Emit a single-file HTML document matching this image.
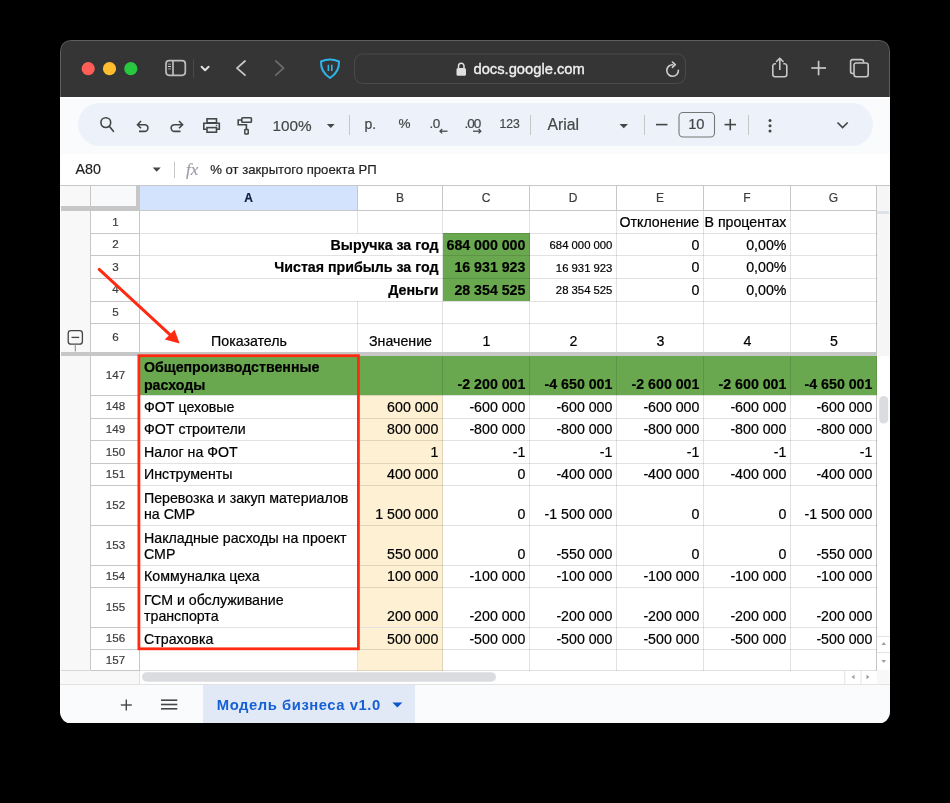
<!DOCTYPE html>
<html><head><meta charset="utf-8"><style>
html,body{margin:0;padding:0;}
body{width:950px;height:803px;background:#000;position:relative;overflow:hidden;font-family:'Liberation Sans', sans-serif;}
#win{will-change:transform;position:absolute;left:0;top:0;width:950px;height:803px;clip-path:inset(40px 60px 79.5px 60px round 10.5px 10.5px 11.5px 11.5px);}
#win div{position:absolute;}
#ov{position:absolute;left:0;top:0;}
</style></head><body><div id="win">
<div style="left:60px;top:40px;width:830px;height:683px;background:#f9fbfd;"></div>
<div style="left:60px;top:40px;width:830px;height:57px;background:#353535;"></div>
<div style="left:60px;top:97px;width:830px;height:1.5px;background:#ffffff;"></div>
<div style="left:78px;top:103.4px;width:795px;height:42.6px;background:#edf2fa;border-radius:21.3px;"></div>
<div style="left:61px;top:154px;width:828px;height:31px;background:#ffffff;"></div>
<div style="left:60px;top:185px;width:830px;height:1px;background:#c7c7c7;"></div>
<div style="left:61px;top:186px;width:828px;height:498px;background:#ffffff;"></div>
<div style="left:61px;top:186px;width:29px;height:484px;background:#f8f8f8;"></div>
<div style="left:91px;top:186px;width:46px;height:20px;background:#f8f9fa;"></div>
<div style="left:61px;top:670px;width:79px;height:14px;background:#f8f8f8;"></div>
<div style="left:90px;top:186px;width:1px;height:484px;background:#c7c7c7;"></div>
<div style="left:140px;top:186px;width:218px;height:25px;background:#d3e3fd;"></div>
<div style="left:877px;top:186px;width:12px;height:169.5px;background:#f6f6f6;"></div>
<div style="left:877px;top:211px;width:12px;height:3px;background:#dde1e8;"></div>
<div style="left:877px;top:670px;width:12px;height:14px;background:#f8f8f8;"></div>
<div style="left:876px;top:186px;width:1px;height:484px;background:rgba(0,0,0,0.12);"></div>
<div style="left:139px;top:670px;width:1px;height:14px;background:#e0e0e0;"></div>
<div style="left:61px;top:670px;width:30px;height:1px;background:#d8d8d8;"></div>
<div style="left:443px;top:233.1px;width:87px;height:22.700000000000017px;background:#6aa84f;"></div>
<div style="left:443px;top:255.8px;width:87px;height:22.599999999999966px;background:#6aa84f;"></div>
<div style="left:443px;top:278.4px;width:87px;height:22.600000000000023px;background:#6aa84f;"></div>
<div style="left:140px;top:355.5px;width:737px;height:39.8px;background:#6aa84f;"></div>
<div style="left:358px;top:395.3px;width:85px;height:22.80000000000001px;background:#fdf0d3;"></div>
<div style="left:358px;top:418.1px;width:85px;height:22.5px;background:#fdf0d3;"></div>
<div style="left:358px;top:440.6px;width:85px;height:22.599999999999966px;background:#fdf0d3;"></div>
<div style="left:358px;top:463.2px;width:85px;height:22.5px;background:#fdf0d3;"></div>
<div style="left:358px;top:485.7px;width:85px;height:39.69999999999999px;background:#fdf0d3;"></div>
<div style="left:358px;top:525.4px;width:85px;height:40.30000000000007px;background:#fdf0d3;"></div>
<div style="left:358px;top:565.7px;width:85px;height:21.699999999999932px;background:#fdf0d3;"></div>
<div style="left:358px;top:587.4px;width:85px;height:40.10000000000002px;background:#fdf0d3;"></div>
<div style="left:358px;top:627.5px;width:85px;height:22.25px;background:#fdf0d3;"></div>
<div style="left:358px;top:649.75px;width:85px;height:20.75px;background:#fdf0d3;"></div>
<div style="left:140px;top:232.6px;width:737px;height:1px;background:rgba(0,0,0,0.115);"></div>
<div style="left:91px;top:232.6px;width:49px;height:1px;background:#c7c7c7;"></div>
<div style="left:140px;top:255.3px;width:737px;height:1px;background:rgba(0,0,0,0.115);"></div>
<div style="left:91px;top:255.3px;width:49px;height:1px;background:#c7c7c7;"></div>
<div style="left:140px;top:277.9px;width:737px;height:1px;background:rgba(0,0,0,0.115);"></div>
<div style="left:91px;top:277.9px;width:49px;height:1px;background:#c7c7c7;"></div>
<div style="left:140px;top:300.5px;width:737px;height:1px;background:rgba(0,0,0,0.115);"></div>
<div style="left:91px;top:300.5px;width:49px;height:1px;background:#c7c7c7;"></div>
<div style="left:140px;top:323.0px;width:737px;height:1px;background:rgba(0,0,0,0.115);"></div>
<div style="left:91px;top:323.0px;width:49px;height:1px;background:#c7c7c7;"></div>
<div style="left:140px;top:394.8px;width:737px;height:1px;background:rgba(0,0,0,0.115);"></div>
<div style="left:91px;top:394.8px;width:49px;height:1px;background:#c7c7c7;"></div>
<div style="left:140px;top:417.6px;width:737px;height:1px;background:rgba(0,0,0,0.115);"></div>
<div style="left:91px;top:417.6px;width:49px;height:1px;background:#c7c7c7;"></div>
<div style="left:140px;top:440.1px;width:737px;height:1px;background:rgba(0,0,0,0.115);"></div>
<div style="left:91px;top:440.1px;width:49px;height:1px;background:#c7c7c7;"></div>
<div style="left:140px;top:462.7px;width:737px;height:1px;background:rgba(0,0,0,0.115);"></div>
<div style="left:91px;top:462.7px;width:49px;height:1px;background:#c7c7c7;"></div>
<div style="left:140px;top:485.2px;width:737px;height:1px;background:rgba(0,0,0,0.115);"></div>
<div style="left:91px;top:485.2px;width:49px;height:1px;background:#c7c7c7;"></div>
<div style="left:140px;top:524.9px;width:737px;height:1px;background:rgba(0,0,0,0.115);"></div>
<div style="left:91px;top:524.9px;width:49px;height:1px;background:#c7c7c7;"></div>
<div style="left:140px;top:565.2px;width:737px;height:1px;background:rgba(0,0,0,0.115);"></div>
<div style="left:91px;top:565.2px;width:49px;height:1px;background:#c7c7c7;"></div>
<div style="left:140px;top:586.9px;width:737px;height:1px;background:rgba(0,0,0,0.115);"></div>
<div style="left:91px;top:586.9px;width:49px;height:1px;background:#c7c7c7;"></div>
<div style="left:140px;top:627.0px;width:737px;height:1px;background:rgba(0,0,0,0.115);"></div>
<div style="left:91px;top:627.0px;width:49px;height:1px;background:#c7c7c7;"></div>
<div style="left:140px;top:649.25px;width:737px;height:1px;background:rgba(0,0,0,0.115);"></div>
<div style="left:91px;top:649.25px;width:49px;height:1px;background:#c7c7c7;"></div>
<div style="left:140px;top:670.0px;width:737px;height:1px;background:rgba(0,0,0,0.115);"></div>
<div style="left:91px;top:670.0px;width:49px;height:1px;background:#c7c7c7;"></div>
<div style="left:139px;top:186px;width:1px;height:484px;background:#c7c7c7;"></div>
<div style="left:357px;top:186px;width:1px;height:25px;background:#c7c7c7;"></div>
<div style="left:357px;top:211px;width:1px;height:22px;background:rgba(0,0,0,0.115);"></div>
<div style="left:357px;top:301px;width:1px;height:50.5px;background:rgba(0,0,0,0.115);"></div>
<div style="left:357px;top:355.5px;width:1px;height:315px;background:rgba(0,0,0,0.115);"></div>
<div style="left:442px;top:186px;width:1px;height:25px;background:#c7c7c7;"></div>
<div style="left:442px;top:211px;width:1px;height:140.5px;background:rgba(0,0,0,0.115);"></div>
<div style="left:442px;top:355.5px;width:1px;height:315px;background:rgba(0,0,0,0.115);"></div>
<div style="left:529px;top:186px;width:1px;height:25px;background:#c7c7c7;"></div>
<div style="left:529px;top:211px;width:1px;height:140.5px;background:rgba(0,0,0,0.115);"></div>
<div style="left:529px;top:355.5px;width:1px;height:315px;background:rgba(0,0,0,0.115);"></div>
<div style="left:616px;top:186px;width:1px;height:25px;background:#c7c7c7;"></div>
<div style="left:616px;top:211px;width:1px;height:140.5px;background:rgba(0,0,0,0.115);"></div>
<div style="left:616px;top:355.5px;width:1px;height:315px;background:rgba(0,0,0,0.115);"></div>
<div style="left:703px;top:186px;width:1px;height:25px;background:#c7c7c7;"></div>
<div style="left:703px;top:211px;width:1px;height:140.5px;background:rgba(0,0,0,0.115);"></div>
<div style="left:703px;top:355.5px;width:1px;height:315px;background:rgba(0,0,0,0.115);"></div>
<div style="left:790px;top:186px;width:1px;height:25px;background:#c7c7c7;"></div>
<div style="left:790px;top:211px;width:1px;height:140.5px;background:rgba(0,0,0,0.115);"></div>
<div style="left:790px;top:355.5px;width:1px;height:315px;background:rgba(0,0,0,0.115);"></div>
<div style="left:876px;top:186px;width:1px;height:25px;background:#c7c7c7;"></div>
<div style="left:876px;top:211px;width:1px;height:140.5px;background:rgba(0,0,0,0.115);"></div>
<div style="left:876px;top:355.5px;width:1px;height:315px;background:rgba(0,0,0,0.115);"></div>
<div style="left:140px;top:210px;width:737px;height:1px;background:#c7c7c7;"></div>
<div style="left:61px;top:206px;width:79px;height:4.5px;background:#c7c7c7;"></div>
<div style="left:136px;top:186px;width:4px;height:24.5px;background:#c7c7c7;"></div>
<div style="left:61px;top:351.5px;width:816px;height:4px;background:#c7c7c7;"></div>
<div style="top:192.04px;font-size:12px;line-height:12px;font-weight:700;color:#0b1f3f;font-family:'Liberation Sans', sans-serif;white-space:pre;-webkit-text-stroke:0.2px #0b1f3f;left:-51.5px;width:600px;text-align:center;">A</div>
<div style="top:192.04px;font-size:12px;line-height:12px;font-weight:400;color:#3c3c3c;font-family:'Liberation Sans', sans-serif;white-space:pre;-webkit-text-stroke:0.2px #3c3c3c;left:100.0px;width:600px;text-align:center;">B</div>
<div style="top:192.04px;font-size:12px;line-height:12px;font-weight:400;color:#3c3c3c;font-family:'Liberation Sans', sans-serif;white-space:pre;-webkit-text-stroke:0.2px #3c3c3c;left:186.0px;width:600px;text-align:center;">C</div>
<div style="top:192.04px;font-size:12px;line-height:12px;font-weight:400;color:#3c3c3c;font-family:'Liberation Sans', sans-serif;white-space:pre;-webkit-text-stroke:0.2px #3c3c3c;left:273.0px;width:600px;text-align:center;">D</div>
<div style="top:192.04px;font-size:12px;line-height:12px;font-weight:400;color:#3c3c3c;font-family:'Liberation Sans', sans-serif;white-space:pre;-webkit-text-stroke:0.2px #3c3c3c;left:360.0px;width:600px;text-align:center;">E</div>
<div style="top:192.04px;font-size:12px;line-height:12px;font-weight:400;color:#3c3c3c;font-family:'Liberation Sans', sans-serif;white-space:pre;-webkit-text-stroke:0.2px #3c3c3c;left:447.0px;width:600px;text-align:center;">F</div>
<div style="top:192.04px;font-size:12px;line-height:12px;font-weight:400;color:#3c3c3c;font-family:'Liberation Sans', sans-serif;white-space:pre;-webkit-text-stroke:0.2px #3c3c3c;left:533.5px;width:600px;text-align:center;">G</div>
<div style="top:215.83px;font-size:11.6px;line-height:11.6px;font-weight:400;color:#3c3c3c;font-family:'Liberation Sans', sans-serif;white-space:pre;-webkit-text-stroke:0.2px #3c3c3c;left:-184.5px;width:600px;text-align:center;">1</div>
<div style="top:238.23px;font-size:11.6px;line-height:11.6px;font-weight:400;color:#3c3c3c;font-family:'Liberation Sans', sans-serif;white-space:pre;-webkit-text-stroke:0.2px #3c3c3c;left:-184.5px;width:600px;text-align:center;">2</div>
<div style="top:260.88px;font-size:11.6px;line-height:11.6px;font-weight:400;color:#3c3c3c;font-family:'Liberation Sans', sans-serif;white-space:pre;-webkit-text-stroke:0.2px #3c3c3c;left:-184.5px;width:600px;text-align:center;">3</div>
<div style="top:283.48px;font-size:11.6px;line-height:11.6px;font-weight:400;color:#3c3c3c;font-family:'Liberation Sans', sans-serif;white-space:pre;-webkit-text-stroke:0.2px #3c3c3c;left:-184.5px;width:600px;text-align:center;">4</div>
<div style="top:306.03px;font-size:11.6px;line-height:11.6px;font-weight:400;color:#3c3c3c;font-family:'Liberation Sans', sans-serif;white-space:pre;-webkit-text-stroke:0.2px #3c3c3c;left:-184.5px;width:600px;text-align:center;">5</div>
<div style="top:331.28px;font-size:11.6px;line-height:11.6px;font-weight:400;color:#3c3c3c;font-family:'Liberation Sans', sans-serif;white-space:pre;-webkit-text-stroke:0.2px #3c3c3c;left:-184.5px;width:600px;text-align:center;">6</div>
<div style="top:369.18px;font-size:11.6px;line-height:11.6px;font-weight:400;color:#3c3c3c;font-family:'Liberation Sans', sans-serif;white-space:pre;-webkit-text-stroke:0.2px #3c3c3c;left:-184.5px;width:600px;text-align:center;">147</div>
<div style="top:400.48px;font-size:11.6px;line-height:11.6px;font-weight:400;color:#3c3c3c;font-family:'Liberation Sans', sans-serif;white-space:pre;-webkit-text-stroke:0.2px #3c3c3c;left:-184.5px;width:600px;text-align:center;">148</div>
<div style="top:423.13px;font-size:11.6px;line-height:11.6px;font-weight:400;color:#3c3c3c;font-family:'Liberation Sans', sans-serif;white-space:pre;-webkit-text-stroke:0.2px #3c3c3c;left:-184.5px;width:600px;text-align:center;">149</div>
<div style="top:445.68px;font-size:11.6px;line-height:11.6px;font-weight:400;color:#3c3c3c;font-family:'Liberation Sans', sans-serif;white-space:pre;-webkit-text-stroke:0.2px #3c3c3c;left:-184.5px;width:600px;text-align:center;">150</div>
<div style="top:468.23px;font-size:11.6px;line-height:11.6px;font-weight:400;color:#3c3c3c;font-family:'Liberation Sans', sans-serif;white-space:pre;-webkit-text-stroke:0.2px #3c3c3c;left:-184.5px;width:600px;text-align:center;">151</div>
<div style="top:499.33px;font-size:11.6px;line-height:11.6px;font-weight:400;color:#3c3c3c;font-family:'Liberation Sans', sans-serif;white-space:pre;-webkit-text-stroke:0.2px #3c3c3c;left:-184.5px;width:600px;text-align:center;">152</div>
<div style="top:539.33px;font-size:11.6px;line-height:11.6px;font-weight:400;color:#3c3c3c;font-family:'Liberation Sans', sans-serif;white-space:pre;-webkit-text-stroke:0.2px #3c3c3c;left:-184.5px;width:600px;text-align:center;">153</div>
<div style="top:570.33px;font-size:11.6px;line-height:11.6px;font-weight:400;color:#3c3c3c;font-family:'Liberation Sans', sans-serif;white-space:pre;-webkit-text-stroke:0.2px #3c3c3c;left:-184.5px;width:600px;text-align:center;">154</div>
<div style="top:601.23px;font-size:11.6px;line-height:11.6px;font-weight:400;color:#3c3c3c;font-family:'Liberation Sans', sans-serif;white-space:pre;-webkit-text-stroke:0.2px #3c3c3c;left:-184.5px;width:600px;text-align:center;">155</div>
<div style="top:632.41px;font-size:11.6px;line-height:11.6px;font-weight:400;color:#3c3c3c;font-family:'Liberation Sans', sans-serif;white-space:pre;-webkit-text-stroke:0.2px #3c3c3c;left:-184.5px;width:600px;text-align:center;">156</div>
<div style="top:653.91px;font-size:11.6px;line-height:11.6px;font-weight:400;color:#3c3c3c;font-family:'Liberation Sans', sans-serif;white-space:pre;-webkit-text-stroke:0.2px #3c3c3c;left:-184.5px;width:600px;text-align:center;">157</div>
<div style="top:215.38px;font-size:14.2px;line-height:14.2px;font-weight:400;color:#000;font-family:'Liberation Sans', sans-serif;white-space:pre;-webkit-text-stroke:0.2px #000;left:619.5px;">Отклонение</div>
<div style="top:215.38px;font-size:14.2px;line-height:14.2px;font-weight:400;color:#000;font-family:'Liberation Sans', sans-serif;white-space:pre;-webkit-text-stroke:0.2px #000;left:704.5px;">В процентах</div>
<div style="top:237.58px;font-size:14.2px;line-height:14.2px;font-weight:700;color:#000;font-family:'Liberation Sans', sans-serif;white-space:pre;-webkit-text-stroke:0.2px #000;right:511.6px;text-align:right;">Выручка за год</div>
<div style="top:237.58px;font-size:14.2px;line-height:14.2px;font-weight:700;color:#000;font-family:'Liberation Sans', sans-serif;white-space:pre;-webkit-text-stroke:0.2px #000;right:424.6px;text-align:right;">684 000 000</div>
<div style="top:240.03px;font-size:11.3px;line-height:11.3px;font-weight:400;color:#000;font-family:'Liberation Sans', sans-serif;white-space:pre;-webkit-text-stroke:0.2px #000;right:337.6px;text-align:right;">684 000 000</div>
<div style="top:237.58px;font-size:14.2px;line-height:14.2px;font-weight:400;color:#000;font-family:'Liberation Sans', sans-serif;white-space:pre;-webkit-text-stroke:0.2px #000;right:250.60000000000002px;text-align:right;">0</div>
<div style="top:237.58px;font-size:14.2px;line-height:14.2px;font-weight:400;color:#000;font-family:'Liberation Sans', sans-serif;white-space:pre;-webkit-text-stroke:0.2px #000;right:163.60000000000002px;text-align:right;">0,00%</div>
<div style="top:260.18px;font-size:14.2px;line-height:14.2px;font-weight:700;color:#000;font-family:'Liberation Sans', sans-serif;white-space:pre;-webkit-text-stroke:0.2px #000;right:511.6px;text-align:right;">Чистая прибыль за год</div>
<div style="top:260.18px;font-size:14.2px;line-height:14.2px;font-weight:700;color:#000;font-family:'Liberation Sans', sans-serif;white-space:pre;-webkit-text-stroke:0.2px #000;right:424.6px;text-align:right;">16 931 923</div>
<div style="top:262.63px;font-size:11.3px;line-height:11.3px;font-weight:400;color:#000;font-family:'Liberation Sans', sans-serif;white-space:pre;-webkit-text-stroke:0.2px #000;right:337.6px;text-align:right;">16 931 923</div>
<div style="top:260.18px;font-size:14.2px;line-height:14.2px;font-weight:400;color:#000;font-family:'Liberation Sans', sans-serif;white-space:pre;-webkit-text-stroke:0.2px #000;right:250.60000000000002px;text-align:right;">0</div>
<div style="top:260.18px;font-size:14.2px;line-height:14.2px;font-weight:400;color:#000;font-family:'Liberation Sans', sans-serif;white-space:pre;-webkit-text-stroke:0.2px #000;right:163.60000000000002px;text-align:right;">0,00%</div>
<div style="top:282.78px;font-size:14.2px;line-height:14.2px;font-weight:700;color:#000;font-family:'Liberation Sans', sans-serif;white-space:pre;-webkit-text-stroke:0.2px #000;right:511.6px;text-align:right;">Деньги</div>
<div style="top:282.78px;font-size:14.2px;line-height:14.2px;font-weight:700;color:#000;font-family:'Liberation Sans', sans-serif;white-space:pre;-webkit-text-stroke:0.2px #000;right:424.6px;text-align:right;">28 354 525</div>
<div style="top:285.23px;font-size:11.3px;line-height:11.3px;font-weight:400;color:#000;font-family:'Liberation Sans', sans-serif;white-space:pre;-webkit-text-stroke:0.2px #000;right:337.6px;text-align:right;">28 354 525</div>
<div style="top:282.78px;font-size:14.2px;line-height:14.2px;font-weight:400;color:#000;font-family:'Liberation Sans', sans-serif;white-space:pre;-webkit-text-stroke:0.2px #000;right:250.60000000000002px;text-align:right;">0</div>
<div style="top:282.78px;font-size:14.2px;line-height:14.2px;font-weight:400;color:#000;font-family:'Liberation Sans', sans-serif;white-space:pre;-webkit-text-stroke:0.2px #000;right:163.60000000000002px;text-align:right;">0,00%</div>
<div style="top:333.78px;font-size:14.2px;line-height:14.2px;font-weight:400;color:#000;font-family:'Liberation Sans', sans-serif;white-space:pre;-webkit-text-stroke:0.2px #000;left:-51.0px;width:600px;text-align:center;">Показатель</div>
<div style="top:333.78px;font-size:14.2px;line-height:14.2px;font-weight:400;color:#000;font-family:'Liberation Sans', sans-serif;white-space:pre;-webkit-text-stroke:0.2px #000;left:100.5px;width:600px;text-align:center;">Значение</div>
<div style="top:333.78px;font-size:14.2px;line-height:14.2px;font-weight:400;color:#000;font-family:'Liberation Sans', sans-serif;white-space:pre;-webkit-text-stroke:0.2px #000;left:186.5px;width:600px;text-align:center;">1</div>
<div style="top:333.78px;font-size:14.2px;line-height:14.2px;font-weight:400;color:#000;font-family:'Liberation Sans', sans-serif;white-space:pre;-webkit-text-stroke:0.2px #000;left:273.5px;width:600px;text-align:center;">2</div>
<div style="top:333.78px;font-size:14.2px;line-height:14.2px;font-weight:400;color:#000;font-family:'Liberation Sans', sans-serif;white-space:pre;-webkit-text-stroke:0.2px #000;left:360.5px;width:600px;text-align:center;">3</div>
<div style="top:333.78px;font-size:14.2px;line-height:14.2px;font-weight:400;color:#000;font-family:'Liberation Sans', sans-serif;white-space:pre;-webkit-text-stroke:0.2px #000;left:447.5px;width:600px;text-align:center;">4</div>
<div style="top:333.78px;font-size:14.2px;line-height:14.2px;font-weight:400;color:#000;font-family:'Liberation Sans', sans-serif;white-space:pre;-webkit-text-stroke:0.2px #000;left:534.0px;width:600px;text-align:center;">5</div>
<div style="top:360.08px;font-size:14.2px;line-height:14.2px;font-weight:700;color:#000;font-family:'Liberation Sans', sans-serif;white-space:pre;-webkit-text-stroke:0.2px #000;left:143.9px;">Общепроизводственные</div>
<div style="top:378.38px;font-size:14.2px;line-height:14.2px;font-weight:700;color:#000;font-family:'Liberation Sans', sans-serif;white-space:pre;-webkit-text-stroke:0.2px #000;left:143.9px;">расходы</div>
<div style="top:377.08px;font-size:14.2px;line-height:14.2px;font-weight:700;color:#000;font-family:'Liberation Sans', sans-serif;white-space:pre;-webkit-text-stroke:0.2px #000;right:424.6px;text-align:right;">-2 200 001</div>
<div style="top:377.08px;font-size:14.2px;line-height:14.2px;font-weight:700;color:#000;font-family:'Liberation Sans', sans-serif;white-space:pre;-webkit-text-stroke:0.2px #000;right:337.6px;text-align:right;">-4 650 001</div>
<div style="top:377.08px;font-size:14.2px;line-height:14.2px;font-weight:700;color:#000;font-family:'Liberation Sans', sans-serif;white-space:pre;-webkit-text-stroke:0.2px #000;right:250.60000000000002px;text-align:right;">-2 600 001</div>
<div style="top:377.08px;font-size:14.2px;line-height:14.2px;font-weight:700;color:#000;font-family:'Liberation Sans', sans-serif;white-space:pre;-webkit-text-stroke:0.2px #000;right:163.60000000000002px;text-align:right;">-2 600 001</div>
<div style="top:377.08px;font-size:14.2px;line-height:14.2px;font-weight:700;color:#000;font-family:'Liberation Sans', sans-serif;white-space:pre;-webkit-text-stroke:0.2px #000;right:77.60000000000002px;text-align:right;">-4 650 001</div>
<div style="top:399.88px;font-size:14.2px;line-height:14.2px;font-weight:400;color:#000;font-family:'Liberation Sans', sans-serif;white-space:pre;-webkit-text-stroke:0.2px #000;left:144px;">ФОТ цеховые</div>
<div style="top:399.88px;font-size:14.2px;line-height:14.2px;font-weight:400;color:#000;font-family:'Liberation Sans', sans-serif;white-space:pre;-webkit-text-stroke:0.2px #000;right:511.6px;text-align:right;">600 000</div>
<div style="top:399.88px;font-size:14.2px;line-height:14.2px;font-weight:400;color:#000;font-family:'Liberation Sans', sans-serif;white-space:pre;-webkit-text-stroke:0.2px #000;right:424.6px;text-align:right;">-600 000</div>
<div style="top:399.88px;font-size:14.2px;line-height:14.2px;font-weight:400;color:#000;font-family:'Liberation Sans', sans-serif;white-space:pre;-webkit-text-stroke:0.2px #000;right:337.6px;text-align:right;">-600 000</div>
<div style="top:399.88px;font-size:14.2px;line-height:14.2px;font-weight:400;color:#000;font-family:'Liberation Sans', sans-serif;white-space:pre;-webkit-text-stroke:0.2px #000;right:250.60000000000002px;text-align:right;">-600 000</div>
<div style="top:399.88px;font-size:14.2px;line-height:14.2px;font-weight:400;color:#000;font-family:'Liberation Sans', sans-serif;white-space:pre;-webkit-text-stroke:0.2px #000;right:163.60000000000002px;text-align:right;">-600 000</div>
<div style="top:399.88px;font-size:14.2px;line-height:14.2px;font-weight:400;color:#000;font-family:'Liberation Sans', sans-serif;white-space:pre;-webkit-text-stroke:0.2px #000;right:77.60000000000002px;text-align:right;">-600 000</div>
<div style="top:422.38px;font-size:14.2px;line-height:14.2px;font-weight:400;color:#000;font-family:'Liberation Sans', sans-serif;white-space:pre;-webkit-text-stroke:0.2px #000;left:144px;">ФОТ строители</div>
<div style="top:422.38px;font-size:14.2px;line-height:14.2px;font-weight:400;color:#000;font-family:'Liberation Sans', sans-serif;white-space:pre;-webkit-text-stroke:0.2px #000;right:511.6px;text-align:right;">800 000</div>
<div style="top:422.38px;font-size:14.2px;line-height:14.2px;font-weight:400;color:#000;font-family:'Liberation Sans', sans-serif;white-space:pre;-webkit-text-stroke:0.2px #000;right:424.6px;text-align:right;">-800 000</div>
<div style="top:422.38px;font-size:14.2px;line-height:14.2px;font-weight:400;color:#000;font-family:'Liberation Sans', sans-serif;white-space:pre;-webkit-text-stroke:0.2px #000;right:337.6px;text-align:right;">-800 000</div>
<div style="top:422.38px;font-size:14.2px;line-height:14.2px;font-weight:400;color:#000;font-family:'Liberation Sans', sans-serif;white-space:pre;-webkit-text-stroke:0.2px #000;right:250.60000000000002px;text-align:right;">-800 000</div>
<div style="top:422.38px;font-size:14.2px;line-height:14.2px;font-weight:400;color:#000;font-family:'Liberation Sans', sans-serif;white-space:pre;-webkit-text-stroke:0.2px #000;right:163.60000000000002px;text-align:right;">-800 000</div>
<div style="top:422.38px;font-size:14.2px;line-height:14.2px;font-weight:400;color:#000;font-family:'Liberation Sans', sans-serif;white-space:pre;-webkit-text-stroke:0.2px #000;right:77.60000000000002px;text-align:right;">-800 000</div>
<div style="top:444.98px;font-size:14.2px;line-height:14.2px;font-weight:400;color:#000;font-family:'Liberation Sans', sans-serif;white-space:pre;-webkit-text-stroke:0.2px #000;left:144px;">Налог на ФОТ</div>
<div style="top:444.98px;font-size:14.2px;line-height:14.2px;font-weight:400;color:#000;font-family:'Liberation Sans', sans-serif;white-space:pre;-webkit-text-stroke:0.2px #000;right:511.6px;text-align:right;">1</div>
<div style="top:444.98px;font-size:14.2px;line-height:14.2px;font-weight:400;color:#000;font-family:'Liberation Sans', sans-serif;white-space:pre;-webkit-text-stroke:0.2px #000;right:424.6px;text-align:right;">-1</div>
<div style="top:444.98px;font-size:14.2px;line-height:14.2px;font-weight:400;color:#000;font-family:'Liberation Sans', sans-serif;white-space:pre;-webkit-text-stroke:0.2px #000;right:337.6px;text-align:right;">-1</div>
<div style="top:444.98px;font-size:14.2px;line-height:14.2px;font-weight:400;color:#000;font-family:'Liberation Sans', sans-serif;white-space:pre;-webkit-text-stroke:0.2px #000;right:250.60000000000002px;text-align:right;">-1</div>
<div style="top:444.98px;font-size:14.2px;line-height:14.2px;font-weight:400;color:#000;font-family:'Liberation Sans', sans-serif;white-space:pre;-webkit-text-stroke:0.2px #000;right:163.60000000000002px;text-align:right;">-1</div>
<div style="top:444.98px;font-size:14.2px;line-height:14.2px;font-weight:400;color:#000;font-family:'Liberation Sans', sans-serif;white-space:pre;-webkit-text-stroke:0.2px #000;right:77.60000000000002px;text-align:right;">-1</div>
<div style="top:467.48px;font-size:14.2px;line-height:14.2px;font-weight:400;color:#000;font-family:'Liberation Sans', sans-serif;white-space:pre;-webkit-text-stroke:0.2px #000;left:144px;">Инструменты</div>
<div style="top:467.48px;font-size:14.2px;line-height:14.2px;font-weight:400;color:#000;font-family:'Liberation Sans', sans-serif;white-space:pre;-webkit-text-stroke:0.2px #000;right:511.6px;text-align:right;">400 000</div>
<div style="top:467.48px;font-size:14.2px;line-height:14.2px;font-weight:400;color:#000;font-family:'Liberation Sans', sans-serif;white-space:pre;-webkit-text-stroke:0.2px #000;right:424.6px;text-align:right;">0</div>
<div style="top:467.48px;font-size:14.2px;line-height:14.2px;font-weight:400;color:#000;font-family:'Liberation Sans', sans-serif;white-space:pre;-webkit-text-stroke:0.2px #000;right:337.6px;text-align:right;">-400 000</div>
<div style="top:467.48px;font-size:14.2px;line-height:14.2px;font-weight:400;color:#000;font-family:'Liberation Sans', sans-serif;white-space:pre;-webkit-text-stroke:0.2px #000;right:250.60000000000002px;text-align:right;">-400 000</div>
<div style="top:467.48px;font-size:14.2px;line-height:14.2px;font-weight:400;color:#000;font-family:'Liberation Sans', sans-serif;white-space:pre;-webkit-text-stroke:0.2px #000;right:163.60000000000002px;text-align:right;">-400 000</div>
<div style="top:467.48px;font-size:14.2px;line-height:14.2px;font-weight:400;color:#000;font-family:'Liberation Sans', sans-serif;white-space:pre;-webkit-text-stroke:0.2px #000;right:77.60000000000002px;text-align:right;">-400 000</div>
<div style="top:490.78px;font-size:14.2px;line-height:14.2px;font-weight:400;color:#000;font-family:'Liberation Sans', sans-serif;white-space:pre;-webkit-text-stroke:0.2px #000;left:144px;">Перевозка и закуп материалов</div>
<div style="top:506.98px;font-size:14.2px;line-height:14.2px;font-weight:400;color:#000;font-family:'Liberation Sans', sans-serif;white-space:pre;-webkit-text-stroke:0.2px #000;left:144px;">на СМР</div>
<div style="top:507.18px;font-size:14.2px;line-height:14.2px;font-weight:400;color:#000;font-family:'Liberation Sans', sans-serif;white-space:pre;-webkit-text-stroke:0.2px #000;right:511.6px;text-align:right;">1 500 000</div>
<div style="top:507.18px;font-size:14.2px;line-height:14.2px;font-weight:400;color:#000;font-family:'Liberation Sans', sans-serif;white-space:pre;-webkit-text-stroke:0.2px #000;right:424.6px;text-align:right;">0</div>
<div style="top:507.18px;font-size:14.2px;line-height:14.2px;font-weight:400;color:#000;font-family:'Liberation Sans', sans-serif;white-space:pre;-webkit-text-stroke:0.2px #000;right:337.6px;text-align:right;">-1 500 000</div>
<div style="top:507.18px;font-size:14.2px;line-height:14.2px;font-weight:400;color:#000;font-family:'Liberation Sans', sans-serif;white-space:pre;-webkit-text-stroke:0.2px #000;right:250.60000000000002px;text-align:right;">0</div>
<div style="top:507.18px;font-size:14.2px;line-height:14.2px;font-weight:400;color:#000;font-family:'Liberation Sans', sans-serif;white-space:pre;-webkit-text-stroke:0.2px #000;right:163.60000000000002px;text-align:right;">0</div>
<div style="top:507.18px;font-size:14.2px;line-height:14.2px;font-weight:400;color:#000;font-family:'Liberation Sans', sans-serif;white-space:pre;-webkit-text-stroke:0.2px #000;right:77.60000000000002px;text-align:right;">-1 500 000</div>
<div style="top:531.08px;font-size:14.2px;line-height:14.2px;font-weight:400;color:#000;font-family:'Liberation Sans', sans-serif;white-space:pre;-webkit-text-stroke:0.2px #000;left:144px;">Накладные расходы на проект</div>
<div style="top:547.28px;font-size:14.2px;line-height:14.2px;font-weight:400;color:#000;font-family:'Liberation Sans', sans-serif;white-space:pre;-webkit-text-stroke:0.2px #000;left:144px;">СМР</div>
<div style="top:547.48px;font-size:14.2px;line-height:14.2px;font-weight:400;color:#000;font-family:'Liberation Sans', sans-serif;white-space:pre;-webkit-text-stroke:0.2px #000;right:511.6px;text-align:right;">550 000</div>
<div style="top:547.48px;font-size:14.2px;line-height:14.2px;font-weight:400;color:#000;font-family:'Liberation Sans', sans-serif;white-space:pre;-webkit-text-stroke:0.2px #000;right:424.6px;text-align:right;">0</div>
<div style="top:547.48px;font-size:14.2px;line-height:14.2px;font-weight:400;color:#000;font-family:'Liberation Sans', sans-serif;white-space:pre;-webkit-text-stroke:0.2px #000;right:337.6px;text-align:right;">-550 000</div>
<div style="top:547.48px;font-size:14.2px;line-height:14.2px;font-weight:400;color:#000;font-family:'Liberation Sans', sans-serif;white-space:pre;-webkit-text-stroke:0.2px #000;right:250.60000000000002px;text-align:right;">0</div>
<div style="top:547.48px;font-size:14.2px;line-height:14.2px;font-weight:400;color:#000;font-family:'Liberation Sans', sans-serif;white-space:pre;-webkit-text-stroke:0.2px #000;right:163.60000000000002px;text-align:right;">0</div>
<div style="top:547.48px;font-size:14.2px;line-height:14.2px;font-weight:400;color:#000;font-family:'Liberation Sans', sans-serif;white-space:pre;-webkit-text-stroke:0.2px #000;right:77.60000000000002px;text-align:right;">-550 000</div>
<div style="top:569.18px;font-size:14.2px;line-height:14.2px;font-weight:400;color:#000;font-family:'Liberation Sans', sans-serif;white-space:pre;-webkit-text-stroke:0.2px #000;left:144px;">Коммуналка цеха</div>
<div style="top:569.18px;font-size:14.2px;line-height:14.2px;font-weight:400;color:#000;font-family:'Liberation Sans', sans-serif;white-space:pre;-webkit-text-stroke:0.2px #000;right:511.6px;text-align:right;">100 000</div>
<div style="top:569.18px;font-size:14.2px;line-height:14.2px;font-weight:400;color:#000;font-family:'Liberation Sans', sans-serif;white-space:pre;-webkit-text-stroke:0.2px #000;right:424.6px;text-align:right;">-100 000</div>
<div style="top:569.18px;font-size:14.2px;line-height:14.2px;font-weight:400;color:#000;font-family:'Liberation Sans', sans-serif;white-space:pre;-webkit-text-stroke:0.2px #000;right:337.6px;text-align:right;">-100 000</div>
<div style="top:569.18px;font-size:14.2px;line-height:14.2px;font-weight:400;color:#000;font-family:'Liberation Sans', sans-serif;white-space:pre;-webkit-text-stroke:0.2px #000;right:250.60000000000002px;text-align:right;">-100 000</div>
<div style="top:569.18px;font-size:14.2px;line-height:14.2px;font-weight:400;color:#000;font-family:'Liberation Sans', sans-serif;white-space:pre;-webkit-text-stroke:0.2px #000;right:163.60000000000002px;text-align:right;">-100 000</div>
<div style="top:569.18px;font-size:14.2px;line-height:14.2px;font-weight:400;color:#000;font-family:'Liberation Sans', sans-serif;white-space:pre;-webkit-text-stroke:0.2px #000;right:77.60000000000002px;text-align:right;">-100 000</div>
<div style="top:592.88px;font-size:14.2px;line-height:14.2px;font-weight:400;color:#000;font-family:'Liberation Sans', sans-serif;white-space:pre;-webkit-text-stroke:0.2px #000;left:144px;">ГСМ и обслуживание</div>
<div style="top:609.08px;font-size:14.2px;line-height:14.2px;font-weight:400;color:#000;font-family:'Liberation Sans', sans-serif;white-space:pre;-webkit-text-stroke:0.2px #000;left:144px;">транспорта</div>
<div style="top:609.28px;font-size:14.2px;line-height:14.2px;font-weight:400;color:#000;font-family:'Liberation Sans', sans-serif;white-space:pre;-webkit-text-stroke:0.2px #000;right:511.6px;text-align:right;">200 000</div>
<div style="top:609.28px;font-size:14.2px;line-height:14.2px;font-weight:400;color:#000;font-family:'Liberation Sans', sans-serif;white-space:pre;-webkit-text-stroke:0.2px #000;right:424.6px;text-align:right;">-200 000</div>
<div style="top:609.28px;font-size:14.2px;line-height:14.2px;font-weight:400;color:#000;font-family:'Liberation Sans', sans-serif;white-space:pre;-webkit-text-stroke:0.2px #000;right:337.6px;text-align:right;">-200 000</div>
<div style="top:609.28px;font-size:14.2px;line-height:14.2px;font-weight:400;color:#000;font-family:'Liberation Sans', sans-serif;white-space:pre;-webkit-text-stroke:0.2px #000;right:250.60000000000002px;text-align:right;">-200 000</div>
<div style="top:609.28px;font-size:14.2px;line-height:14.2px;font-weight:400;color:#000;font-family:'Liberation Sans', sans-serif;white-space:pre;-webkit-text-stroke:0.2px #000;right:163.60000000000002px;text-align:right;">-200 000</div>
<div style="top:609.28px;font-size:14.2px;line-height:14.2px;font-weight:400;color:#000;font-family:'Liberation Sans', sans-serif;white-space:pre;-webkit-text-stroke:0.2px #000;right:77.60000000000002px;text-align:right;">-200 000</div>
<div style="top:631.53px;font-size:14.2px;line-height:14.2px;font-weight:400;color:#000;font-family:'Liberation Sans', sans-serif;white-space:pre;-webkit-text-stroke:0.2px #000;left:144px;">Страховка</div>
<div style="top:631.53px;font-size:14.2px;line-height:14.2px;font-weight:400;color:#000;font-family:'Liberation Sans', sans-serif;white-space:pre;-webkit-text-stroke:0.2px #000;right:511.6px;text-align:right;">500 000</div>
<div style="top:631.53px;font-size:14.2px;line-height:14.2px;font-weight:400;color:#000;font-family:'Liberation Sans', sans-serif;white-space:pre;-webkit-text-stroke:0.2px #000;right:424.6px;text-align:right;">-500 000</div>
<div style="top:631.53px;font-size:14.2px;line-height:14.2px;font-weight:400;color:#000;font-family:'Liberation Sans', sans-serif;white-space:pre;-webkit-text-stroke:0.2px #000;right:337.6px;text-align:right;">-500 000</div>
<div style="top:631.53px;font-size:14.2px;line-height:14.2px;font-weight:400;color:#000;font-family:'Liberation Sans', sans-serif;white-space:pre;-webkit-text-stroke:0.2px #000;right:250.60000000000002px;text-align:right;">-500 000</div>
<div style="top:631.53px;font-size:14.2px;line-height:14.2px;font-weight:400;color:#000;font-family:'Liberation Sans', sans-serif;white-space:pre;-webkit-text-stroke:0.2px #000;right:163.60000000000002px;text-align:right;">-500 000</div>
<div style="top:631.53px;font-size:14.2px;line-height:14.2px;font-weight:400;color:#000;font-family:'Liberation Sans', sans-serif;white-space:pre;-webkit-text-stroke:0.2px #000;right:77.60000000000002px;text-align:right;">-500 000</div>
<div style="top:118.35px;font-size:15.3px;line-height:15.3px;font-weight:400;color:#444746;font-family:'Liberation Sans', sans-serif;white-space:pre;-webkit-text-stroke:0.2px #444746;left:272.5px;">100%</div>
<div style="top:116.95px;font-size:14px;line-height:14px;font-weight:400;color:#444746;font-family:'Liberation Sans', sans-serif;white-space:pre;-webkit-text-stroke:0.2px #444746;left:364.5px;">р.</div>
<div style="top:117.37px;font-size:13.5px;line-height:13.5px;font-weight:400;color:#444746;font-family:'Liberation Sans', sans-serif;white-space:pre;-webkit-text-stroke:0.2px #444746;left:398.5px;">%</div>
<div style="top:117.37px;font-size:13.5px;line-height:13.5px;font-weight:400;color:#444746;font-family:'Liberation Sans', sans-serif;white-space:pre;-webkit-text-stroke:0.2px #444746;left:429.5px;letter-spacing:-0.5px;">.0</div>
<div style="top:117.37px;font-size:13.5px;line-height:13.5px;font-weight:400;color:#444746;font-family:'Liberation Sans', sans-serif;white-space:pre;-webkit-text-stroke:0.2px #444746;left:464.5px;letter-spacing:-1px;">.00</div>
<div style="top:118.47px;font-size:12.2px;line-height:12.2px;font-weight:400;color:#444746;font-family:'Liberation Sans', sans-serif;white-space:pre;-webkit-text-stroke:0.2px #444746;left:499.5px;">123</div>
<div style="top:117.07px;font-size:15.75px;line-height:15.75px;font-weight:400;color:#444746;font-family:'Liberation Sans', sans-serif;white-space:pre;-webkit-text-stroke:0.2px #444746;left:547.5px;">Arial</div>
<div style="top:117.26px;font-size:14.7px;line-height:14.7px;font-weight:400;color:#444746;font-family:'Liberation Sans', sans-serif;white-space:pre;-webkit-text-stroke:0.2px #444746;left:396.29999999999995px;width:600px;text-align:center;">10</div>
<div style="top:161.70px;font-size:14.3px;line-height:14.3px;font-weight:400;color:#1f1f1f;font-family:'Liberation Sans', sans-serif;white-space:pre;-webkit-text-stroke:0.2px #1f1f1f;left:75.4px;">A80</div>
<div style="top:162.69px;font-size:13.13px;line-height:13.13px;font-weight:400;color:#1f1f1f;font-family:'Liberation Sans', sans-serif;white-space:pre;-webkit-text-stroke:0.2px #1f1f1f;left:210.3px;">% от закрытого проекта РП</div>
<div style="top:161.11px;font-size:17px;line-height:17px;font-weight:400;color:#9aa0a6;font-family:'Liberation Serif', serif;white-space:pre;-webkit-text-stroke:0.2px #9aa0a6;left:186px;font-style:italic;">fx</div>
<div style="top:61.84px;font-size:14.72px;line-height:14.72px;font-weight:400;color:#f0f0f0;font-family:'Liberation Sans', sans-serif;white-space:pre;-webkit-text-stroke:0.35px #f0f0f0;left:473.5px;">docs.google.com</div>
<div style="left:60px;top:684px;width:830px;height:1px;background:#e3e3e3;"></div>
<div style="left:203px;top:685px;width:212px;height:38px;background:#e1e9f7;"></div>
<div style="top:697.77px;font-size:14.8px;line-height:14.8px;font-weight:700;color:#1760d4;font-family:'Liberation Sans', sans-serif;white-space:pre;-webkit-text-stroke:0px #1760d4;left:216.8px;letter-spacing:0.55px;">Модель бизнеса v1.0</div>
<svg id="ov" width="950" height="803" viewBox="0 0 950 803">
<circle cx="88.2" cy="68.7" r="6.6" fill="#ff5f57"/>
<circle cx="109.5" cy="68.7" r="6.6" fill="#febc2e"/>
<circle cx="130.8" cy="68.7" r="6.6" fill="#28c840"/>
<path d="M60.5,97 V50.5 A10,10 0 0 1 70.5,40.5 H879.5 A10,10 0 0 1 889.5,50.5 V97" fill="none" stroke="#5f5f5f" stroke-width="1"/>
<rect x="166" y="60.7" width="19.3" height="14.6" rx="3.2" fill="none" stroke="#bdbdbd" stroke-width="1.7"/>
<line x1="173" y1="60.7" x2="173" y2="75.3" stroke="#bdbdbd" stroke-width="1.7"/>
<line x1="167.9" y1="64.2" x2="171" y2="64.2" stroke="#8a8a8a" stroke-width="1.2"/>
<line x1="167.9" y1="66.5" x2="171" y2="66.5" stroke="#d0d0d0" stroke-width="1"/>
<line x1="167.9" y1="68.9" x2="171" y2="68.9" stroke="#8a8a8a" stroke-width="1.2"/>
<line x1="193.5" y1="59.2" x2="193.5" y2="77.8" stroke="#4a4a4a" stroke-width="1"/>
<polyline points="201.6,66.7 205.1,70.2 208.6,66.7" fill="none" stroke="#e0e0e0" stroke-width="2" stroke-linecap="round" stroke-linejoin="round"/>
<polyline points="245,61 237,68.1 245,75.2" fill="none" stroke="#c8c8c8" stroke-width="1.8" stroke-linecap="round" stroke-linejoin="round"/>
<polyline points="275.8,61 283.6,68.1 275.8,75.2" fill="none" stroke="#6a6a6a" stroke-width="1.8" stroke-linecap="round" stroke-linejoin="round"/>
<path d="M321,61.5 Q330,57.5 339,61.5 Q339.5,72 330,78 Q320.5,72 321,61.5 Z" fill="none" stroke="#2fb5ea" stroke-width="2" stroke-linejoin="round"/>
<line x1="328.4" y1="64.8" x2="328.4" y2="71" stroke="#2fb5ea" stroke-width="1.6"/>
<line x1="331.8" y1="64.8" x2="331.8" y2="71" stroke="#2fb5ea" stroke-width="1.6"/>
<rect x="354.5" y="54" width="331" height="29.5" rx="8" fill="none" stroke="#4b4b4b" stroke-width="1"/>
<rect x="456.5" y="68" width="9.5" height="7.8" rx="1.5" fill="#e0e0e0"/>
<path d="M458.5,68.5 V66 A2.75,2.75 0 0 1 464,66 V68.5" fill="none" stroke="#e0e0e0" stroke-width="1.5"/>
<path d="M672.6,64.7 A5.8,5.8 0 1 0 678.4,70.3" fill="none" stroke="#d0d0d0" stroke-width="1.6" stroke-linecap="round"/>
<polyline points="672.4,62 675.3,64.7 672.4,67.4" fill="none" stroke="#d0d0d0" stroke-width="1.6" stroke-linecap="round" stroke-linejoin="round"/>
<path d="M776,63.8 H775 A2.2,2.2 0 0 0 772.8,66 V74.6 A2.2,2.2 0 0 0 775,76.8 H784.6 A2.2,2.2 0 0 0 786.8,74.6 V66 A2.2,2.2 0 0 0 784.6,63.8 H783.3" fill="none" stroke="#c8c8c8" stroke-width="1.6"/>
<line x1="779.8" y1="58.5" x2="779.8" y2="70" stroke="#c8c8c8" stroke-width="1.6"/>
<polyline points="776.5,61.5 779.8,58.2 783.1,61.5" fill="none" stroke="#c8c8c8" stroke-width="1.6" stroke-linecap="round" stroke-linejoin="round"/>
<line x1="818.6" y1="60.8" x2="818.6" y2="75.3" stroke="#c8c8c8" stroke-width="1.7"/>
<line x1="811.3" y1="68" x2="826" y2="68" stroke="#c8c8c8" stroke-width="1.7"/>
<path d="M853.8,73.5 H852.5 A2,2 0 0 1 850.6,71.5 V61.5 A2,2 0 0 1 852.6,59.6 H861.5 A2,2 0 0 1 863.5,61.5 V62.8" fill="none" stroke="#c8c8c8" stroke-width="1.6"/>
<rect x="854" y="63" width="14.2" height="13.8" rx="2.2" fill="none" stroke="#c8c8c8" stroke-width="1.6"/>
<circle cx="105.8" cy="122.6" r="4.9" fill="none" stroke="#444746" stroke-width="1.6"/>
<line x1="109.3" y1="126.2" x2="113.4" y2="131.3" stroke="#444746" stroke-width="1.7" stroke-linecap="round"/>
<path d="M137.8,124.7 H144.6 A3.35,3.35 0 0 1 144.6,131.4 H139" fill="none" stroke="#444746" stroke-width="1.6"/>
<polyline points="141,121 137.5,124.7 141,128.3" fill="none" stroke="#444746" stroke-width="1.6" stroke-linejoin="miter"/>
<path d="M182.6,124.7 H174.5 A3.35,3.35 0 0 0 174.5,131.4 H180.5" fill="none" stroke="#444746" stroke-width="1.6"/>
<polyline points="179,121 182.6,124.7 179,128.3" fill="none" stroke="#444746" stroke-width="1.6"/>
<rect x="207" y="118.8" width="9.5" height="4" fill="none" stroke="#444746" stroke-width="1.6"/>
<path d="M206.5,129.2 H203.8 V123.2 H219.3 V129.2 H216.5" fill="none" stroke="#444746" stroke-width="1.6"/>
<rect x="207" y="127.6" width="9.5" height="4.6" fill="none" stroke="#444746" stroke-width="1.6"/>
<circle cx="216.5" cy="125.5" r="0.8" fill="#444746"/>
<rect x="241.8" y="117.8" width="9.6" height="4.4" rx="0.8" fill="none" stroke="#444746" stroke-width="1.6"/>
<path d="M241.8,120 H238.2 V124.8 H246.4 V129.3" fill="none" stroke="#444746" stroke-width="1.6"/>
<rect x="244.8" y="129.5" width="3.4" height="4.6" rx="0.6" fill="none" stroke="#444746" stroke-width="1.5"/>
<polygon points="326.8,124 334.7,124 330.75,128" fill="#444746"/>
<polygon points="619.5,124 628,124 623.75,128.2" fill="#444746"/>
<line x1="349.5" y1="115" x2="349.5" y2="135" stroke="#c7c7c7" stroke-width="1"/>
<line x1="530.5" y1="115" x2="530.5" y2="135" stroke="#c7c7c7" stroke-width="1"/>
<line x1="644.5" y1="115" x2="644.5" y2="135" stroke="#c7c7c7" stroke-width="1"/>
<line x1="748.5" y1="115" x2="748.5" y2="135" stroke="#c7c7c7" stroke-width="1"/>
<line x1="440" y1="131.2" x2="447.5" y2="131.2" stroke="#444746" stroke-width="1.3"/>
<polyline points="442.2,129 440,131.2 442.2,133.4" fill="none" stroke="#444746" stroke-width="1.3"/>
<line x1="473" y1="131.2" x2="480.8" y2="131.2" stroke="#444746" stroke-width="1.3"/>
<polyline points="478.6,129 480.8,131.2 478.6,133.4" fill="none" stroke="#444746" stroke-width="1.3"/>
<line x1="656" y1="124.6" x2="667.5" y2="124.6" stroke="#444746" stroke-width="1.6"/>
<rect x="679" y="112.5" width="35.5" height="24.5" rx="4" fill="none" stroke="#747775" stroke-width="1.1"/>
<line x1="724.5" y1="124.6" x2="736" y2="124.6" stroke="#444746" stroke-width="1.6"/>
<line x1="730.25" y1="119" x2="730.25" y2="130.3" stroke="#444746" stroke-width="1.6"/>
<circle cx="770" cy="120.5" r="1.5" fill="#444746"/>
<circle cx="770" cy="125.8" r="1.5" fill="#444746"/>
<circle cx="770" cy="131.1" r="1.5" fill="#444746"/>
<polyline points="837.5,122.5 842.6,127.6 847.7,122.5" fill="none" stroke="#444746" stroke-width="1.7"/>
<polygon points="152.7,167.5 160.7,167.5 156.7,171.8" fill="#444746"/>
<line x1="174.5" y1="161.5" x2="174.5" y2="178.3" stroke="#c7c7c7" stroke-width="1"/>
<rect x="138.9" y="355.7" width="219.5" height="293.1" fill="none" stroke="#ff2a12" stroke-width="2.8"/>
<line x1="99.2" y1="269.4" x2="171" y2="335.6" stroke="#ff2a12" stroke-width="3" stroke-linecap="round"/>
<polygon points="179.6,343.6 164.8,339.6 174.6,329.8" fill="#ff2a12"/>
<rect x="68.2" y="330.6" width="14.2" height="13.6" rx="2.8" fill="#f8f8f8" stroke="#444" stroke-width="1.3"/>
<line x1="71.5" y1="337.4" x2="79.2" y2="337.4" stroke="#444" stroke-width="1.3"/>
<line x1="75.3" y1="344.2" x2="75.3" y2="351.5" stroke="#888" stroke-width="1"/>
<rect x="879.2" y="396" width="9" height="27.5" rx="4.5" fill="#dadce0"/>
<rect x="142" y="672.2" width="354" height="9.5" rx="4.75" fill="#dadce0"/>
<line x1="877" y1="652.6" x2="890" y2="652.6" stroke="#e3e3e3" stroke-width="1"/>
<line x1="877" y1="636.4" x2="890" y2="636.4" stroke="#e3e3e3" stroke-width="1"/>
<polygon points="881.5,645 886,645 883.75,642" fill="#9e9e9e"/>
<polygon points="881.5,660 886,660 883.75,663" fill="#9e9e9e"/>
<line x1="844.8" y1="670.5" x2="844.8" y2="684" stroke="#e3e3e3" stroke-width="1"/>
<line x1="861" y1="670.5" x2="861" y2="684" stroke="#e3e3e3" stroke-width="1"/>
<polygon points="851.5,677 854.5,674.7 854.5,679.3" fill="#9e9e9e"/>
<polygon points="869.5,677 866.5,674.7 866.5,679.3" fill="#9e9e9e"/>
<line x1="126.3" y1="699.5" x2="126.3" y2="710.5" stroke="#444746" stroke-width="1.4"/>
<line x1="120.8" y1="705" x2="131.8" y2="705" stroke="#444746" stroke-width="1.4"/>
<line x1="161" y1="700.2" x2="177.3" y2="700.2" stroke="#444746" stroke-width="1.6"/>
<line x1="161" y1="704.5" x2="177.3" y2="704.5" stroke="#444746" stroke-width="1.6"/>
<line x1="161" y1="708.8" x2="177.3" y2="708.8" stroke="#444746" stroke-width="1.6"/>
<polygon points="392.4,702.5 402.4,702.5 397.4,707.5" fill="#0b57d0"/>
</svg>
</div></body></html>
